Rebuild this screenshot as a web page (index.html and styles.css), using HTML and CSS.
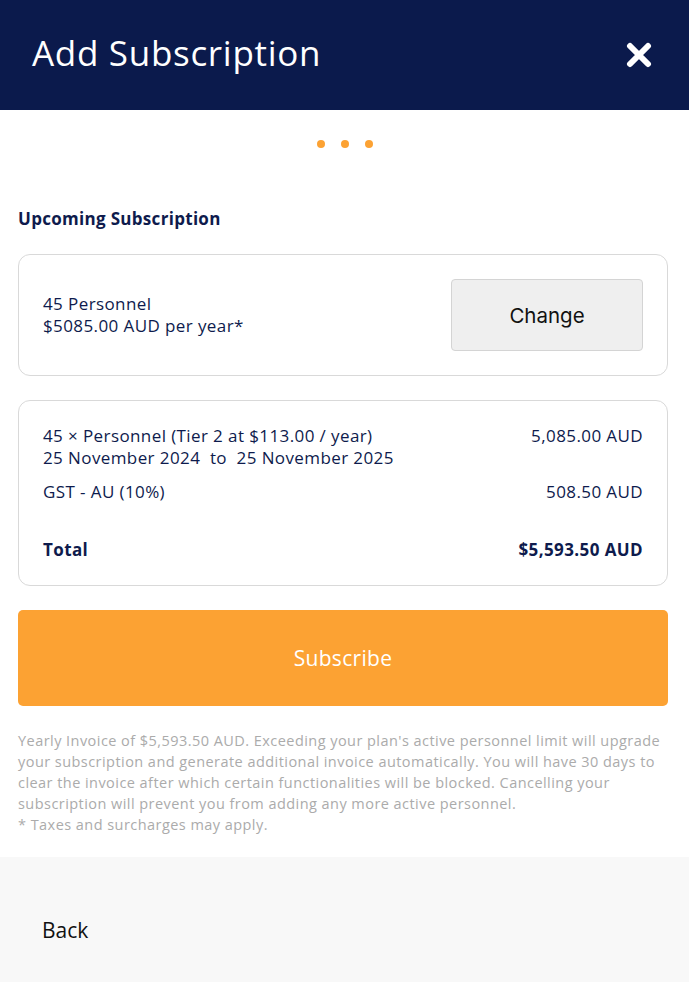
FILE: index.html
```html
<!DOCTYPE html>
<html lang="en">
<head>
<meta charset="utf-8">
<title>Add Subscription</title>
<link rel="stylesheet" href="styles.css">
</head>
<body>
<header class="topbar">
  <h1 class="title">Add Subscription</h1>
  <button class="close" aria-label="Close">
    <svg width="26" height="26" viewBox="0 0 26 26"><path d="M4 4L22 22M22 4L4 22" stroke="#fff" stroke-width="6" stroke-linecap="round"/></svg>
  </button>
</header>
<main class="content">
  <div class="dots"><span></span><span></span><span></span></div>
  <h2 class="section-title">Upcoming Subscription</h2>
  <section class="card plan">
    <div class="plan-text">
      <div>45 Personnel</div>
      <div>$5085.00 AUD per year*</div>
    </div>
    <button class="change-btn">Change</button>
  </section>
  <section class="card summary">
    <div class="row">
      <div>45 × Personnel (Tier 2 at $113.00 / year)<br>25 November 2024 &nbsp;to &nbsp;25 November 2025</div>
      <div>5,085.00 AUD</div>
    </div>
    <div class="row">
      <div>GST - AU (10%)</div>
      <div>508.50 AUD</div>
    </div>
    <div class="row total">
      <div>Total</div>
      <div>$5,593.50 AUD</div>
    </div>
  </section>
  <button class="subscribe-btn">Subscribe</button>
  <p class="note">Yearly Invoice of $5,593.50 AUD. Exceeding your plan's active personnel limit will upgrade your subscription and generate additional invoice automatically. You will have 30 days to clear the invoice after which certain functionalities will be blocked. Cancelling your subscription will prevent you from adding any more active personnel.<br>* Taxes and surcharges may apply.</p>
</main>
<footer class="footer">
  <button class="back-btn">Back</button>
</footer>
</body>
</html>
```

FILE: styles.css
```css
* { box-sizing: border-box; }
html, body { margin: 0; padding: 0; }
body {
  font-family: "Open Sans", Roboto, sans-serif;
  background: #fff;
  color: #0e1b4d;
  width: 689px;
}
button { font-family: inherit; cursor: pointer; }

.topbar {
  height: 110px;
  background: #0b1a4c;
  display: flex;
  align-items: center;
  justify-content: space-between;
  padding: 0 37px 0 32px;
}
.title {
  margin: 0;
  color: #fff;
  font-size: 35px;
  font-weight: 400;
  line-height: 40px;
  padding-bottom: 4px;
  letter-spacing: 0.7px;
}
.close {
  background: none;
  border: 0;
  padding: 0;
  width: 26px;
  height: 26px;
  display: flex;
}

.content { padding: 0 21px 0 18px; }

.dots {
  display: flex;
  justify-content: center;
  gap: 16px;
  padding-top: 30px;
  padding-left: 3px;
  height: 38px;
}
.dots span {
  width: 8px;
  height: 8px;
  border-radius: 50%;
  background: #fca233;
}

.section-title {
  margin: 0;
  margin-top: 60px;
  font-size: 17px;
  font-weight: 700;
  line-height: 22px;
  letter-spacing: 0.3px;
  color: #0e1b4d;
}

.card {
  border: 1px solid #d9d9d9;
  border-radius: 12px;
  background: #fff;
}
.plan {
  margin-top: 24px;
  padding: 24px;
  display: flex;
  align-items: center;
  justify-content: space-between;
}
.plan-text {
  font-size: 17px;
  line-height: 22px;
  letter-spacing: 0.4px;
}
.change-btn {
  width: 192px;
  height: 72px;
  background: #efefef;
  border: 1px solid #d4d4d4;
  border-radius: 4px;
  font-family: Inter, Roboto, sans-serif;
  font-size: 20.5px;
  color: #111;
}

.summary {
  margin-top: 24px;
  padding: 24px 24px 24px;
  display: flex;
  flex-direction: column;
  gap: 12px;
}
.row {
  display: flex;
  justify-content: space-between;
  font-size: 17px;
  line-height: 22px;
  letter-spacing: 0.4px;
}
.row.total {
  margin-top: 24px;
  font-weight: 700;
}

.subscribe-btn {
  display: block;
  width: 100%;
  margin-top: 24px;
  height: 96px;
  border: 0;
  border-radius: 5px;
  background: #fca233;
  color: #fff;
  font-size: 21px;
  letter-spacing: 0.3px;
}

.note {
  margin: 24px 0 22px;
  font-size: 14.5px;
  line-height: 21px;
  letter-spacing: 0.45px;
  color: #ababab;
}

.footer {
  background: #f8f8f8;
  height: 125px;
  padding: 61px 24px 0;
}
.back-btn {
  background: none;
  border: 0;
  padding: 0 0 0 18px;
  font-size: 21px;
  line-height: 24px;
  color: #111;
}
```
